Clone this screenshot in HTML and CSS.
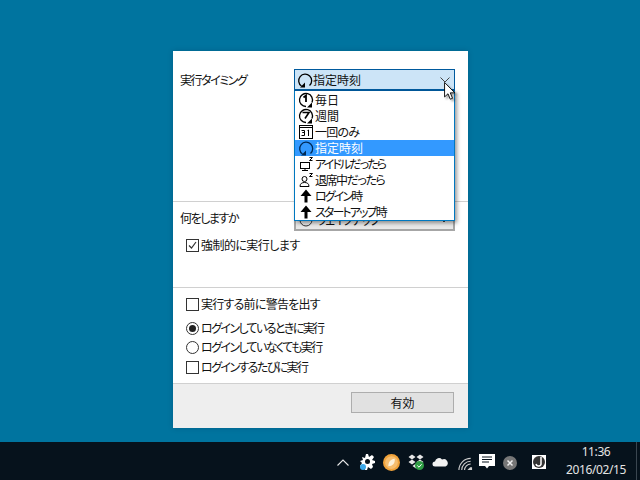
FILE: index.html
```html
<!DOCTYPE html>
<html lang="ja">
<head>
<meta charset="utf-8">
<title>実行タイミング</title>
<link rel="stylesheet" href="styles.css">
</head>
<body>
<svg class="defs" width="0" height="0">
  <symbol id="i-clock" viewBox="0 0 16 16"><path d="M4.500 14A6.500 6.500 0 1 1 12.500 13.500" fill="none" stroke="currentColor" stroke-width="1.300"/><path d="M3 15.500h5v-5z" fill="currentColor"/></symbol>
  <symbol id="i-up" viewBox="0 0 16 16"><path d="M8 1.500 2.500 8H6.500v6.500h3V8h4z" fill="#000"/></symbol>
</svg>
<main class="desktop">
  <section class="panel">
    <div class="top">
      <span class="label k2">実行タイミング</span>
      <div class="combo open">
        <svg class="ic"><use href="#i-clock"/></svg>
        <span class="combo-text">指定時刻</span>
        <svg class="chev" viewBox="0 0 10 6"><path d="M.5.500 5 5 9.500.500" fill="none" stroke="#444" stroke-width="1"/></svg>
      </div>
      <ul class="menu">
        <li><svg class="ic" viewBox="0 0 16 16"><path d="M8 14.500A6.500 6.500 0 1 1 14 10.500" fill="none" stroke="#000" stroke-width="1.300"/><path d="M5.500 5.500 8 3.500V10" fill="none" stroke="#000" stroke-width="1.800"/><path d="M9 15.500h5v-5z"/></svg>毎日</li>
        <li><svg class="ic" viewBox="0 0 16 16"><path d="M8 14.500A6.500 6.500 0 1 1 14 10.500" fill="none" stroke="#000" stroke-width="1.300"/><path d="M4.500 4.500h6.500L7 10.500" fill="none" stroke="#000" stroke-width="1.600"/><path d="M9 15.500h5v-5z"/></svg>週間</li>
        <li><svg class="ic" viewBox="0 0 16 16"><rect x="1.500" y="1.500" width="13" height="13" fill="none" stroke="#000"/><path d="M1.500 3.500h13" stroke="#000"/><path d="M3.500 6.500h3v2h-2 2v3h-3M9.500 6.500l1-.5v6" fill="none" stroke="#000"/></svg><span class="k3">一回のみ</span></li>
        <li class="sel"><svg class="ic"><use href="#i-clock"/></svg>指定時刻</li>
        <li><svg class="ic" viewBox="0 0 16 16"><rect x="2.500" y="6.500" width="9" height="6" fill="none" stroke="#000"/><path d="M4 14.500h6M7 12.500v2" stroke="#000"/><path d="M11.500 1.500h3l-3 3h3" fill="none" stroke="#000"/></svg><span class="k1">アイドルだったら</span></li>
        <li><svg class="ic" viewBox="0 0 16 16"><circle cx="6.500" cy="7" r="2.500" fill="none" stroke="#000"/><path d="M2 14.500c0-3 2-4 4.500-4s4.500 1 4.500 4z" fill="none" stroke="#000"/><path d="M11.500 1.500h3l-3 3h3" fill="none" stroke="#000"/></svg><span class="k2">退席中だったら</span></li>
        <li><svg class="ic"><use href="#i-up"/></svg><span class="k1">ログイン時</span></li>
        <li><svg class="ic"><use href="#i-up"/></svg><span class="k1">スタートアップ時</span></li>
      </ul>
    </div>
    <div class="action">
      <div class="action-row">
        <span class="label k2">何をしますか</span>
        <div class="combo closed">
          <svg class="ic" viewBox="0 0 16 16"><circle cx="8" cy="8" r="6" fill="none" stroke="#333"/></svg>
          <span class="combo-text k2">ウェイクアップ</span>
          <svg class="chev" viewBox="0 0 10 6"><path d="M.5.500 5 5 9.500.500" fill="none" stroke="#444"/></svg>
        </div>
      </div>
      <label class="opt forced k4"><span class="box checked"><svg viewBox="0 0 11 11"><path d="M2 5.500 4.500 8 9 2" fill="none" stroke="#333" stroke-width="1.200"/></svg></span>強制的に実行します</label>
    </div>
    <div class="options">
      <label class="opt warn k3"><span class="box"></span>実行する前に警告を出す</label>
      <label class="opt radio-a k5"><span class="radio on"></span>ログインしているときに実行</label>
      <label class="opt radio-b k5"><span class="radio"></span>ログインしていなくても実行</label>
      <label class="opt each k5"><span class="box"></span>ログインするたびに実行</label>
    </div>
    <footer class="foot"><button class="apply">有効</button></footer>
  </section>
  <svg class="cursor" viewBox="0 0 13 21"><path d="M.5.500v16l3.800-3.500 2.500 6 2.500-1-2.500-6h5z" fill="#fff" stroke="#000"/></svg>
</main>
<footer class="taskbar">
  <svg class="tray t-caret" viewBox="0 0 12 7"><path d="M.5 6.500 6 1l5.500 5.500" fill="none" stroke="#e8e8e8" stroke-width="1.100"/></svg>
  <svg class="tray t-gear" viewBox="0 0 16 16"><path d="M6 0h2l1 3 3-2 2 2-2 3 3 1v2l-3 1 1 3-2 2-3-2-1 3H5l-1-3-3 1-1-2 2-3-2-2 3-1-1-3 3 1z" fill="#fff"/><circle cx="7.500" cy="7.500" r="2.500" fill="#06121c"/><circle cx="3" cy="13" r="3" fill="#3aa8ea"/></svg>
  <svg class="tray t-orange" viewBox="0 0 16 16"><circle cx="8" cy="8" r="8" fill="#f0a23a"/><circle cx="8" cy="8" r="6" fill="#f6bd6e"/><path d="M5 11.500c0-4 2-6.500 6-7 .5 4.500-2 7-6 7z" fill="#fdf0d8"/></svg>
  <svg class="tray t-drop" viewBox="0 0 16 16"><path d="M4 .5 .5 3 4 5.500 7.500 3zM12 .5 8.500 3 12 5.500 15.500 3zM4 5.500 .5 8 4 10.500 7.500 8zM12 5.500 8.500 8 12 10.500 15.500 8zM8 9.500 4.500 12 8 14.500 11.500 12z" fill="#e8e8e8"/><circle cx="11.500" cy="11.500" r="4.500" fill="#2f9e44"/><path d="M9.300 11.500l1.700 1.700 2.600-3" fill="none" stroke="#fff"/></svg>
  <svg class="tray t-cloud" viewBox="0 0 16 11"><path d="M3 10.500A2.500 2.500 0 0 1 3 5.500 4 4 0 0 1 10 3.500 3.500 3.500 0 0 1 13.500 10.500z" fill="#f2f2f2"/></svg>
  <svg class="tray t-wifi" viewBox="0 0 16 14"><path d="M1 13.500A12.500 12.500 0 0 1 13.500 1M4 13.500a9.500 9.500 0 0 1 9.500-9.500M7 13.500a6.500 6.500 0 0 1 6.500-6.500" fill="none" stroke="#cfcfcf" stroke-width="1.200"/><path d="M10 13.500h5v-3l-2 0z" fill="#cfcfcf"/></svg>
  <svg class="tray t-note" viewBox="0 0 16 15"><path d="M0 0h16v12h-6l-2 2.500L6 12H0z" fill="#fff"/><path d="M3 3h10M3 5.500h10M3 8h7" stroke="#06121c"/></svg>
  <svg class="tray t-x" viewBox="0 0 14 14"><circle cx="7" cy="7" r="7" fill="#777"/><path d="M4.500 4.500l5 5M9.500 4.500l-5 5" stroke="#eee" stroke-width="1.500"/></svg>
  <svg class="tray t-j" viewBox="0 0 14 14"><rect width="14" height="14" fill="#fff"/><circle cx="7" cy="7" r="6" fill="#333"/><path d="M9 2v6a2.500 2.500 0 0 1-5 1" fill="none" stroke="#fff" stroke-width="1.500"/></svg>
  <div class="clock"><span>11:36</span><span>2016/02/15</span></div>
  <span class="show-desktop"></span>
</footer>
</body>
</html>
```

FILE: styles.css
```css
* { box-sizing: border-box; }
html, body { margin: 0; height: 100%; }
body {
  width: 640px; height: 480px; overflow: hidden;
  display: flex; flex-direction: column;
  background: #00749f;
  font: 12px/16px "Noto Sans CJK JP", "Noto Sans", sans-serif;
  font-feature-settings: "palt";
  color: #111;
}
.defs { position: absolute; }
.k1 { letter-spacing: -1.9px; }
.k2 { letter-spacing: -1.45px; }
.k3 { letter-spacing: -.75px; }
.k4 { letter-spacing: -.55px; }
.k5 { letter-spacing: -1.6px; }
.desktop { flex: 1; position: relative; padding: 51px 0 0 173px; }
.panel {
  width: 295px; height: 377px; background: #fff;
  display: flex; flex-direction: column;
  box-shadow: 0 0 5px rgba(0,40,70,.25);
}
.top { position: relative; height: 150px; padding: 18px 13px 0 7px; display: flex; justify-content: space-between; }
.label { line-height: 22px; }
.combo {
  width: 161px; height: 22px; display: flex; align-items: center; padding: 0 3px 0 2px;
  border: 1px solid #7a7a7a;
}
.combo.open { background: #cce4f7; border-color: #005a9e; border-bottom-width: 2px; }
.combo.closed { background: #e8e8e8; border: 2px solid #a6a6a6; height: 23px; padding: 0 3px 0 2px; }
.combo-text { flex: 1; }
.open .ic { margin-right: 0; }
.closed .combo-text { margin-left: 1px; }
.ic { width: 16px; height: 16px; flex: none; color: #000; margin-right: 1px; }
.menu {
  position: absolute; z-index: 2; left: 121px; top: 40px; width: 161px; height: 130px;
  margin: 0; padding: 1px 0 0; list-style: none;
  background: #fff; border: 1px solid #0078c0; border-top: 0;
  box-shadow: 2px 2px 4px rgba(0,0,0,.4);
}
.chev { width: 10px; height: 6px; margin-right: 1px; }
.menu li { height: 16px; display: flex; align-items: center; padding-left: 3px; color: #111; white-space: nowrap; }
.menu li.sel { background: #3399ff; color: #fff; }
.menu li.sel .ic { color: #002a55; }
.action { height: 86px; border-top: 1px solid #d0d0d0; padding: 6px 13px 0 7px; }
.action-row { display: flex; justify-content: space-between; height: 24px; }
.action-row .label { line-height: 22px; margin-top: -1px; }
.opt { display: flex; align-items: flex-start; height: 15px; line-height: 14px; }
.forced { margin: 6px 0 0 6px; }
.box {
  width: 13px; height: 13px; border: 1px solid #333; background: #fff; margin: 1px 2px 0 0; flex: none; display: flex;
}
.box svg { width: 11px; height: 11px; }
.options { height: 96px; border-top: 1px solid #d0d0d0; padding: 9px 0 0 13px; }
.radio {
  width: 13px; height: 13px; border: 1px solid #333; border-radius: 50%; margin: 1px 2px 0 0; flex: none; background: #fff; position: relative;
}
.radio.on::after { content: ""; position: absolute; inset: 2px; background: #222; border-radius: 50%; }
.radio-a { margin-top: 9px; }
.radio-b { margin-top: 4px; }
.each { margin-top: 5px; }
.foot {
  flex: 1; background: #eeeeee; border-top: 1px solid #d0d0d0;
  display: flex; justify-content: flex-end; align-items: flex-start; padding: 8px 14px 0 0;
}
.apply {
  width: 103px; height: 21px; padding: 0; background: #e1e1e1; border: 1px solid #adadad;
  font: inherit; color: #111;
}
.cursor { position: absolute; left: 444px; top: 82px; width: 12px; height: 19px; z-index: 3; filter: drop-shadow(2px 2px 1px rgba(0,0,0,.35)); }
.taskbar {
  height: 38px; background: #06121c; position: relative; flex: none;
  display: flex; align-items: center; color: #e4e4e4;
}
.tray { position: absolute; }
.t-caret { left: 337px; top: 17px; width: 12px; height: 7px; }
.t-gear { left: 360px; top: 12px; width: 16px; height: 16px; }
.t-orange { left: 383px; top: 12px; width: 17px; height: 17px; }
.t-drop { left: 408px; top: 12px; width: 16px; height: 16px; }
.t-cloud { left: 432px; top: 14px; width: 16px; height: 11px; }
.t-wifi { left: 458px; top: 15px; width: 15px; height: 14px; }
.t-note { left: 479px; top: 12px; width: 16px; height: 15px; }
.t-x { left: 503px; top: 14px; width: 14px; height: 14px; }
.t-j { left: 532px; top: 13px; width: 14px; height: 14px; }
.clock { position: absolute; left: 561px; top: 1px; width: 70px; display: flex; flex-direction: column; align-items: center; line-height: 18px; font-family: "Noto Sans", sans-serif; letter-spacing: -.4px; }
.show-desktop { position: absolute; left: 636px; top: 0; bottom: 0; width: 1px; background: #3a4650; }
```
